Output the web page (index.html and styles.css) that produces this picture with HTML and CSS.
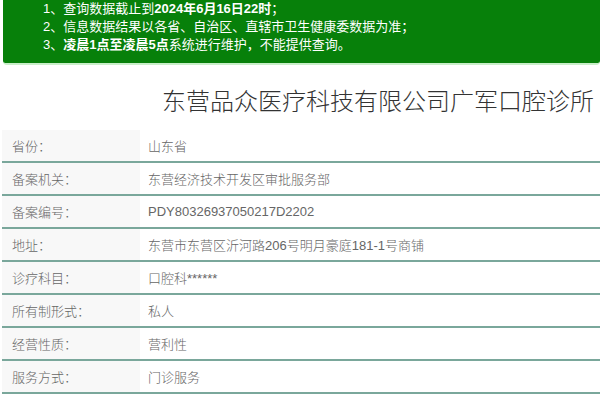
FILE: index.html
```html
<!DOCTYPE html>
<html lang="zh-CN">
<head>
<meta charset="utf-8">
<link rel="stylesheet" href="styles.css">
</head>
<body>
<div class="page">
  <div class="notice">
    <p>1、查询数据截止到<b>2024年6月16日22时</b>；</p>
    <p>2、信息数据结果以各省、自治区、直辖市卫生健康委数据为准；</p>
    <p>3、<b>凌晨1点至凌晨5点</b>系统进行维护，不能提供查询。</p>
  </div>
  <h1 class="title">东营品众医疗科技有限公司广军口腔诊所</h1>
  <table class="info">
    <tr><th>省份：</th><td>山东省</td></tr>
    <tr><th>备案机关：</th><td>东营经济技术开发区审批服务部</td></tr>
    <tr><th>备案编号：</th><td>PDY80326937050217D2202</td></tr>
    <tr><th>地址：</th><td>东营市东营区沂河路206号明月豪庭181-1号商铺</td></tr>
    <tr><th>诊疗科目：</th><td>口腔科******</td></tr>
    <tr><th>所有制形式：</th><td>私人</td></tr>
    <tr><th>经营性质：</th><td>营利性</td></tr>
    <tr><th>服务方式：</th><td>门诊服务</td></tr>
  </table>
</div>
</body>
</html>
```
FILE: styles.css
```css
html, body {
  margin: 0;
  padding: 0;
  background: #fff;
}
body {
  font-family: "Liberation Sans", "Noto Sans CJK SC", sans-serif;
}
.page {
  padding: 0 0 0 2px;
}
.notice {
  margin-left: 1px;
  background: #07800a;
  color: #fff;
  font-size: 13px;
  line-height: 18px;
  padding: 0 0 9px 40px;
  border-radius: 0 0 4px 4px;
  border-bottom: 2px solid #c9eec9;
}
.notice p {
  margin: 0;
}
.notice b {
  font-weight: 700;
}
.title {
  margin: 0;
  padding: 23px 6px 0 0;
  height: 42px;
  text-align: right;
  font-family: "Noto Sans CJK SC", sans-serif;
  font-size: 24px;
  line-height: 24px;
  font-weight: 300;
  color: #333;
}
.info {
  width: 100%;
  border-collapse: collapse;
  font-size: 13px;
  font-weight: 300;
}
.info tr {
  border-bottom: 2px solid #7aa79b;
}
.info th {
  width: 128px;
  height: 31px;
  padding: 0 0 0 10px;
  background: #f8f8f8;
  text-align: left;
  font-weight: 300;
  color: #666;
}
.info td {
  padding: 0 0 0 8px;
  color: #666;
}
```
